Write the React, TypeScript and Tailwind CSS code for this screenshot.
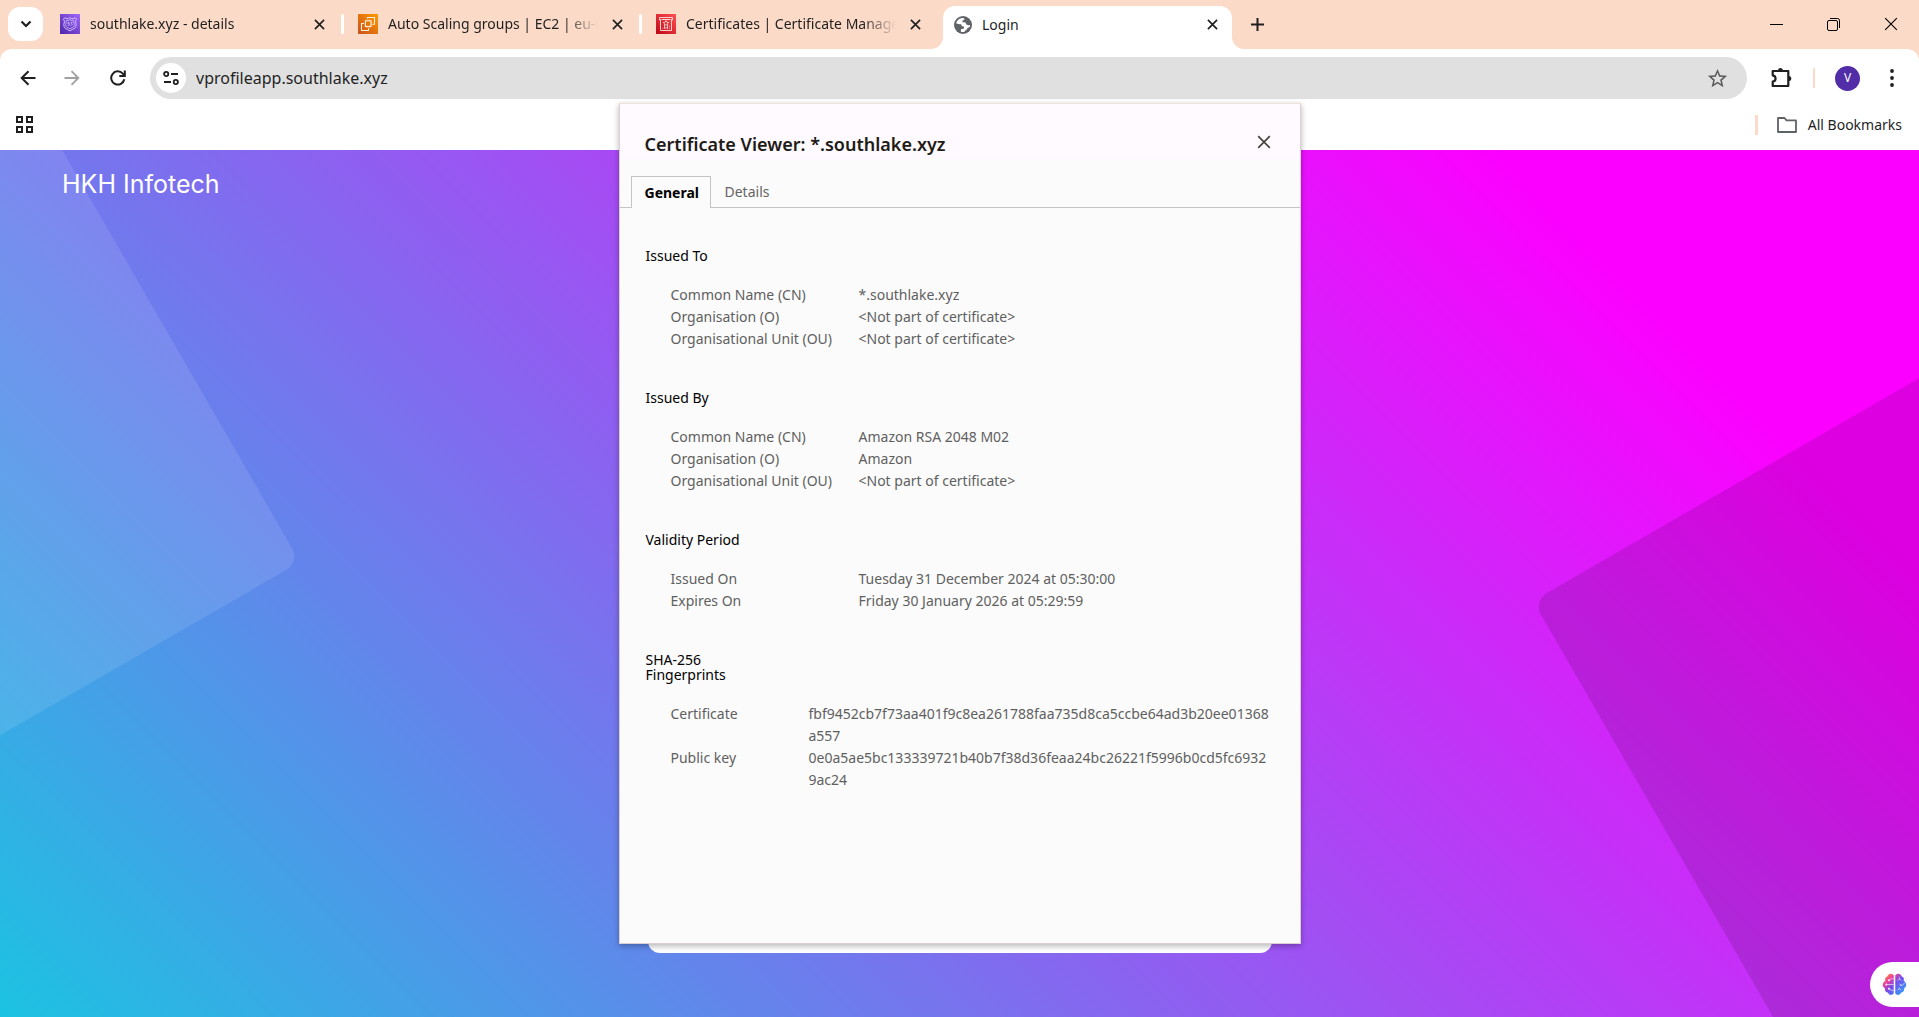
import React from 'react';
import type { ReactNode } from 'react';

const CloseGlyph = ({ size = 11, stroke = 1.8 }: { size?: number; stroke?: number }) => (
  <svg width={size} height={size} viewBox="0 0 12 12" fill="none" stroke="currentColor" strokeWidth={stroke} aria-hidden="true">
    <path d="M1 1 11 11M11 1 1 11" />
  </svg>
);

const Route53Icon = () => (
  <svg className="size-5 shrink-0" viewBox="0 0 20 20" fill="none" aria-hidden="true">
    <defs>
      <linearGradient id="r53" x1="0" y1="20" x2="20" y2="0" gradientUnits="userSpaceOnUse">
        <stop stopColor="#4d27a8" />
        <stop offset="1" stopColor="#a166ff" />
      </linearGradient>
    </defs>
    <rect width="20" height="20" fill="url(#r53)" />
    <g stroke="#dccbff" strokeWidth=".9">
      <path d="M10 3.500 8.400 4.600H6.200L4.900 3.600 3.400 5.400l1.200 1.800-.8 3.200c0 3 1.600 4.400 3.600 5l2.600 1.400 2.600-1.400c2-.6 3.600-2 3.600-5l-.8-3.200 1.200-1.800-1.500-1.800-1.300 1h-2.200z" />
      <path d="M10 5.500 8.800 6.300H6.400l-.3 2-.4 2.300c.1 2 1.200 2.900 2.600 3.300l1.700.8 1.700-.8c1.400-.4 2.500-1.300 2.600-3.300l-.4-2.300-.3-2h-2.400z" strokeWidth=".7" />
      <path d="M9.400 8.300H7.900v1.200h1.400v1.800H7.700M10.700 8.300h1.600l-1 1.200c1.400.3 1.100 1.800-.6 1.800" strokeWidth=".7" />
    </g>
  </svg>
);

const Ec2Icon = () => (
  <svg className="size-5 shrink-0" viewBox="0 0 20 20" fill="none" aria-hidden="true">
    <defs>
      <linearGradient id="ec2" x1="0" y1="20" x2="20" y2="0" gradientUnits="userSpaceOnUse">
        <stop stopColor="#c8511b" />
        <stop offset="1" stopColor="#ff9900" />
      </linearGradient>
    </defs>
    <rect width="20" height="20" fill="url(#ec2)" />
    <g stroke="#fff0dc" strokeWidth="1.100">
      <rect x="7.400" y="6.800" width="5.600" height="5.600" />
      <path d="M9.500 4.500V3.500h7v6.700h-2M6 9.500H3.500v7h7v-2.200" />
      <path d="M8.800 6.800V5.600M11.600 6.800V5.600M8.800 12.400v1.300M11.600 12.400v1.300M13 8.300h1.200M13 11h1.200" strokeWidth=".8" />
    </g>
  </svg>
);

const CertManagerIcon = () => (
  <svg className="size-5 shrink-0" viewBox="0 0 20 20" fill="none" aria-hidden="true">
    <defs>
      <linearGradient id="acm" x1="0" y1="20" x2="20" y2="0" gradientUnits="userSpaceOnUse">
        <stop stopColor="#bd0816" />
        <stop offset="1" stopColor="#ff5252" />
      </linearGradient>
    </defs>
    <rect width="20" height="20" fill="url(#acm)" />
    <g stroke="#ffe3e3" strokeWidth=".9">
      <path d="M4.300 6H3.500V3.500h13V6h-.8M4.500 5.200v11.300h11V5.200M5.500 5.500h9" />
      <path d="m10 6.600.9 1.700 1.800.2-1.300 1.200.3 1.800-1.700-.8-1.700.8.3-1.800-1.300-1.200 1.800-.2z" strokeWidth=".8" />
      <path d="M8.500 11.600v3l1.500-.9 1.500.9v-3M6.300 14.300h1M12.800 14.300h1M12.800 12.300h1" strokeWidth=".8" />
    </g>
  </svg>
);

const GlobeIcon = () => (
  <svg className="size-[18px] shrink-0" viewBox="0 0 18 18" fill="none" aria-hidden="true">
    <circle cx="9" cy="9" r="9" fill="#5f6368" />
    <path d="M9.200 1.900C5.700 1.800 3 4 2.100 7.300c1.600.9 3.300 1 5.200.9 0 1.700.9 2.300 2.600 2.300.4 1.600-.1 2.400-1.400 2.500H7.200c-.5 1-.4 2-.2 2.900 1 .3 2.400.3 3.600 0 .2-1.300.8-1.900 2-2 .5-1.500 1.200-2.400 2.900-2.600.4-.9.600-1.600.6-2.400-1.800.7-3.400.4-4-1.100-.500-1.400-1.500-1.600-3.500-1.400-.5-1.900.1-2.500 1.700-2.400.400-.9.100-1.500-1.100-2.100z" fill="#fff" />
  </svg>
);

type Tab = { title: string; icon: ReactNode };
const tabs: Tab[] = [
  { title: 'southlake.xyz - details', icon: <Route53Icon /> },
  { title: 'Auto Scaling groups | EC2 | eu-n', icon: <Ec2Icon /> },
  { title: 'Certificates | Certificate Manage', icon: <CertManagerIcon /> },
];

function TabStrip() {
  return (
    <header className="flex h-[49px] items-stretch bg-[#fcdac8] pl-2">
      <button aria-label="Search tabs" className="mt-[7px] grid h-[34px] w-[35px] shrink-0 place-items-center rounded-xl bg-white">
        <svg width="12" height="8" viewBox="0 0 12 8" fill="none" stroke="currentColor" strokeWidth="2.200" aria-hidden="true">
          <path d="m1.500 1.500 4.500 4.500 4.500-4.500" />
        </svg>
      </button>
      <nav aria-label="Tabs" className="ml-[3px] flex min-w-0">
        {tabs.map((t, i) => (
          <div key={t.title} className="relative flex h-12 w-[298px] items-center pl-[14px]">
            {t.icon}
            <a href="#tab" className="ml-[10px] w-[210px] overflow-hidden whitespace-nowrap [mask-image:linear-gradient(to_right,black_84%,transparent)]">
              {t.title}
            </a>
            <button aria-label={'Close ' + t.title} className="ml-[9px] grid size-5 place-items-center">
              <CloseGlyph />
            </button>
            {i < tabs.length - 1 && <span className="absolute right-0 top-[14px] h-5 w-[3px] rounded-full bg-white" />}
          </div>
        ))}
        <div className="relative ml-[3px] mt-[6px] flex w-[289px] items-center rounded-t-xl bg-white pb-[6px] pl-[11px]">
          <svg className="absolute -left-3 bottom-0 size-3" viewBox="0 0 12 12" fill="#fff" aria-hidden="true">
            <path d="M12 0v12H0C6.600 12 12 6.600 12 0z" />
          </svg>
          <svg className="absolute -right-3 bottom-0 size-3" viewBox="0 0 12 12" fill="#fff" aria-hidden="true">
            <path d="M0 0v12h12C5.400 12 0 6.600 0 0z" />
          </svg>
          <GlobeIcon />
          <a href="#login" aria-current="page" className="ml-[10px] flex-1">Login</a>
          <button aria-label="Close Login" className="mr-[10px] grid size-5 place-items-center">
            <CloseGlyph />
          </button>
        </div>
      </nav>
      <button aria-label="New tab" className="ml-[11px] grid h-12 w-7 place-items-center">
        <svg width="13" height="13" viewBox="0 0 13 13" stroke="currentColor" strokeWidth="2" aria-hidden="true">
          <path d="M6.500 0v13M0 6.500h13" />
        </svg>
      </button>
      <div className="ml-auto flex h-12 items-stretch text-black">
        <button aria-label="Minimise" className="grid w-[57px] place-items-center">
          <span className="h-px w-[13px] bg-black" />
        </button>
        <button aria-label="Restore" className="grid w-[57px] place-items-center">
          <svg width="13" height="13" viewBox="0 0 13 13" fill="none" stroke="currentColor" aria-hidden="true">
            <rect x=".5" y="2.500" width="10" height="10" rx="1.500" />
            <path d="M3 .5h7.500a2 2 0 0 1 2 2V10" />
          </svg>
        </button>
        <button aria-label="Close window" className="grid w-[57px] place-items-center">
          <CloseGlyph size={14} stroke={1} />
        </button>
      </div>
    </header>
  );
}

function Toolbar() {
  return (
    <div className="bg-[#fcdac8]">
      <div className="flex h-[58px] items-center rounded-t-xl bg-white">
        <button aria-label="Back" className="ml-[13px] grid size-[30px] place-items-center">
          <svg width="16" height="16" viewBox="0 0 16 16" fill="none" stroke="currentColor" strokeWidth="2" aria-hidden="true">
            <path d="M15.500 8H2M8.500 1.200 1.700 8l6.800 6.800" />
          </svg>
        </button>
        <button aria-label="Forward" disabled className="ml-[14px] grid size-[30px] place-items-center text-[#a0a0a0]">
          <svg width="16" height="16" viewBox="0 0 16 16" fill="none" stroke="currentColor" strokeWidth="1.800" aria-hidden="true">
            <path d="M.5 8H14M7.500 1.200 14.300 8l-6.800 6.800" />
          </svg>
        </button>
        <button aria-label="Reload" className="ml-[16px] grid size-[30px] place-items-center">
          <svg width="16" height="16" viewBox="0 0 16 16" fill="none" stroke="currentColor" strokeWidth="2" aria-hidden="true">
            <path d="M14.300 9.300A6.600 6.600 0 1 1 12.800 3.600L14.500 5.500" />
            <path d="M14.800.5v5.600H9.300" />
          </svg>
        </button>
        <div className="ml-[17px] flex h-[42px] flex-1 items-center rounded-full bg-[#e0e0e0] pl-[6px] pr-[18px]">
          <button aria-label="View site information" className="grid size-[30px] place-items-center rounded-full bg-white">
            <svg width="16" height="14" viewBox="0 0 16 14" fill="none" stroke="currentColor" strokeWidth="1.800" aria-hidden="true">
              <circle cx="3.200" cy="3" r="2.100" />
              <path d="M8 3h7M1 11h7" />
              <circle cx="12.800" cy="11" r="2.100" />
            </svg>
          </button>
          <input aria-label="Address" defaultValue="vprofileapp.southlake.xyz" className="ml-[10px] h-8 min-w-0 flex-1 bg-transparent text-base outline-none" />
          <button aria-label="Bookmark this page" className="grid size-6 place-items-center text-[#5b5b5b]">
            <svg width="23" height="23" viewBox="0 0 24 24" fill="currentColor" aria-hidden="true">
              <path d="m22 9.240-7.190-.62L12 2 9.190 8.630 2 9.240l5.460 4.730L5.820 21 12 17.270 18.180 21l-1.630-7.030L22 9.240zM12 15.400l-3.760 2.270 1-4.280-3.320-2.880 4.380-.38L12 6.100l1.710 4.040 4.380.38-3.320 2.880 1 4.280L12 15.400z" />
            </svg>
          </button>
        </div>
        <button aria-label="Extensions" className="ml-[21px] grid size-[26px] place-items-center">
          <svg width="24" height="24" viewBox="0 0 24 24" fill="none" aria-hidden="true">
            <path d="M3.700 5h15.600v15H3.700v-4.300c3.800-.600 3.800-5.800 0-6.400z" stroke="currentColor" strokeWidth="2.200" strokeLinejoin="round" />
            <path d="M9 4.500a2.500 2.500 0 0 1 5 0zM19.800 10a2.500 2.500 0 0 1 0 5z" fill="currentColor" />
          </svg>
        </button>
        <span className="ml-[19px] h-5 w-[2px] bg-[#fcdac8]" />
        <button aria-label="Profile" className="ml-[20px] grid size-[25px] place-items-center rounded-full bg-[#512da8] text-xs text-white">V</button>
        <button aria-label="Menu" className="ml-[20px] mr-[15px] grid size-6 place-items-center">
          <svg width="4" height="18" viewBox="0 0 4 18" fill="currentColor" aria-hidden="true">
            <circle cx="2" cy="2" r="1.900" />
            <circle cx="2" cy="9" r="1.900" />
            <circle cx="2" cy="16" r="1.900" />
          </svg>
        </button>
      </div>
      <div className="flex h-[43px] items-center bg-white pb-[8px] pl-[15px] pr-[17px]">
        <button aria-label="Apps">
          <svg width="19" height="19" viewBox="0 0 19 19" fill="none" stroke="currentColor" strokeWidth="2" aria-hidden="true">
            <path d="M2 2h5v5H2zM12 2h5v5h-5zM2 12h5v5H2zM12 12h5v5h-5z" />
          </svg>
        </button>
        <span className="ml-auto h-5 w-[3px] bg-[#fcdac8]" />
        <button className="ml-[19px] flex items-center gap-[11px]">
          <svg width="20" height="16" viewBox="0 0 20 16" fill="none" stroke="#5f6368" strokeWidth="1.800" strokeLinejoin="round" aria-hidden="true">
            <path d="M1 1h6.500l2 2.300H19V15H1z" />
          </svg>
          All Bookmarks
        </button>
      </div>
    </div>
  );
}

type Section = { heading: ReactNode; narrow?: boolean; rows: [string, string][] };
const none = '<Not part of certificate>';
const sections: Section[] = [
  { heading: 'Issued To', rows: [['Common Name (CN)', '*.southlake.xyz'], ['Organisation (O)', none], ['Organisational Unit (OU)', none]] },
  { heading: 'Issued By', rows: [['Common Name (CN)', 'Amazon RSA 2048 M02'], ['Organisation (O)', 'Amazon'], ['Organisational Unit (OU)', none]] },
  { heading: 'Validity Period', rows: [['Issued On', 'Tuesday 31 December 2024 at 05:30:00'], ['Expires On', 'Friday 30 January 2026 at 05:29:59']] },
  {
    heading: <>SHA-256<br />Fingerprints</>,
    narrow: true,
    rows: [
      ['Certificate', 'fbf9452cb7f73aa401f9c8ea261788faa735d8ca5ccbe64ad3b20ee01368a557'],
      ['Public key', '0e0a5ae5bc133339721b40b7f38d36feaa24bc26221f5996b0cd5fc69329ac24'],
    ],
  },
];

function CertificateViewer() {
  return (
    <section
      role="dialog"
      aria-labelledby="cert-title"
      className="absolute left-1/2 top-[103px] min-h-[841px] w-[682px] -translate-x-1/2 border border-[#dccfd2] border-t-[#f3e0d8] bg-[#fbfbfb] shadow-[0_2px_6px_rgba(0,0,0,0.3)]"
    >
      <div className="flex h-[54px] items-start justify-between bg-[#fefaff] px-[25px] pt-[27px]">
        <h1 id="cert-title" className="text-lg leading-[26px] font-semibold text-[#1f1b16]">Certificate Viewer: *.southlake.xyz</h1>
        <button aria-label="Close" className="grid size-[22px] place-items-center text-[#4a4540]">
          <CloseGlyph size={14} stroke={1.5} />
        </button>
      </div>
      <div role="tablist" className="mt-[18px] flex h-8 items-stretch">
        <span className="w-[11px] border-b border-[#c4c4c4]" />
        <button role="tab" aria-selected="true" className="w-20 border border-b-0 border-[#c4c4c4] pl-[13px] text-left font-bold text-black">General</button>
        <button role="tab" aria-selected="false" className="flex-1 border-b border-[#c4c4c4] pl-[14px] pt-px text-left text-[#646464]">Details</button>
      </div>
      <div role="tabpanel" className="flex flex-col gap-10 pb-10 pl-[26px] pr-[29px] pt-10">
        {sections.map((s, i) => (
          <section key={i}>
            <h2 className="leading-[15px] text-black">{s.heading}</h2>
            <dl className="mt-[21px] pl-[25px] leading-[22px] text-[#5f5f5f]">
              {s.rows.map(([k, v]) => (
                <div key={k} className="flex">
                  <dt className={s.narrow ? 'w-[138px] shrink-0' : 'w-[188px] shrink-0'}>{k}</dt>
                  <dd className="min-w-0 flex-1 break-all">{v}</dd>
                </div>
              ))}
            </dl>
          </section>
        ))}
      </div>
    </section>
  );
}

const BrainIcon = () => (
  <svg width="25" height="25" viewBox="0 0 26 26" fill="none" aria-hidden="true">
    <defs>
      <linearGradient id="brain" x1="3" y1="3" x2="22" y2="22" gradientUnits="userSpaceOnUse">
        <stop stopColor="#ff9a2e" />
        <stop offset=".25" stopColor="#ee3f9c" />
        <stop offset=".5" stopColor="#7a4be8" />
        <stop offset="1" stopColor="#2f9bff" />
      </linearGradient>
    </defs>
    <path d="M12.200 3.500C10.500.8 6 1.500 5.700 4.500 3.500 5 2.500 7.500 3.500 9.300 0 10.500 0 15.500 3 16.800c-.5 2.400 1 4.300 3 4.600 1 3 5 3.300 6.200.7z" fill="url(#brain)" />
    <path d="M13.800 3.500C15.500.8 20 1.500 20.300 4.500c2.200.5 3.200 3 2.200 4.800 3.500 1.200 3.500 6.200.5 7.500.5 2.400-1 4.300-3 4.600-1 3-5 3.300-6.200.7z" fill="url(#brain)" />
    <g stroke="#fff" strokeOpacity=".75" strokeWidth=".8">
      <path d="M12 7H9.500L7.500 8.500M12 13H4.500M12 19H9.500L7.500 17.500M16 9l2-1.500V5M18 7.500l2 1M24 11l-3 3-3-1.500M21 14h-2M16 19l2-1.500V16M18 17.500l2 1" />
      <circle cx="7.300" cy="8.500" r="1" fill="#fff" stroke="none" />
      <circle cx="4.500" cy="13" r="1" fill="#fff" stroke="none" />
      <circle cx="7.300" cy="17.500" r="1" fill="#fff" stroke="none" />
    </g>
  </svg>
);

export default function App() {
  return (
    <div className="relative flex min-h-screen flex-col bg-white text-sm text-[#1f1f1f] [font-family:'Noto_Sans','Open_Sans',sans-serif]">
      <TabStrip />
      <Toolbar />
      <main className="relative flex flex-1 flex-col overflow-hidden bg-[linear-gradient(45deg,#00dbde_-10.6%,#fc00ff_84.9%)]">
        <div className="absolute -left-[700px] -top-[588px] size-[1000px] origin-bottom-right -rotate-30 rounded-2xl bg-white/10" />
        <div className="absolute left-[80%] top-[451px] -ml-[2px] size-[1000px] origin-top-left -rotate-30 rounded-2xl bg-black/12" />
        <a href="#home" className="relative flex h-[70px] items-center self-start pl-[62px] text-[25px] text-white [font-family:Inter,sans-serif]">
          HKH Infotech
        </a>
        <div className="relative mx-auto mb-16 mt-5 w-[624px] flex-1 rounded-xl bg-white" />
        <button aria-label="Open assistant" className="absolute bottom-[10px] right-0 grid h-[45px] w-[49px] place-items-center rounded-l-full bg-white">
          <BrainIcon />
        </button>
      </main>
      <CertificateViewer />
    </div>
  );
}
